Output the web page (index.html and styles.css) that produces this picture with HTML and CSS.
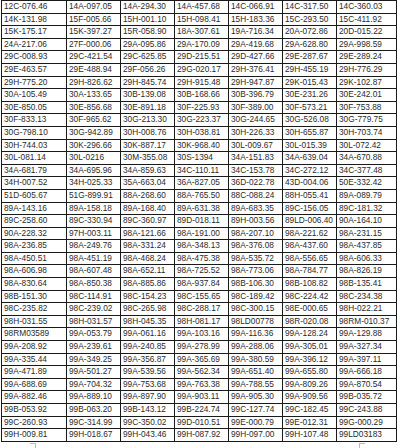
FILE: index.html
```html
<!DOCTYPE html>
<html>
<head>
<meta charset="utf-8">
<link rel="stylesheet" href="styles.css">
</head>
<body>
<div class="sheet">
<span>12C-076.46</span><span>14A-097.05</span><span>14A-294.30</span><span>14A-457.68</span><span>14C-066.91</span><span>14C-317.50</span><span>14C-360.03</span>
<span>14K-131.98</span><span>15F-005.66</span><span>15H-001.10</span><span>15H-098.41</span><span>15H-183.36</span><span>15C-293.50</span><span>15C-411.92</span>
<span>15K-175.17</span><span>15K-397.27</span><span>15R-058.90</span><span>18A-307.61</span><span>19A-716.34</span><span>20A-072.86</span><span>20D-015.22</span>
<span>24A-217.06</span><span>27F-000.06</span><span>29A-095.86</span><span>29A-170.09</span><span>29A-419.68</span><span>29A-628.80</span><span>29A-998.59</span>
<span>29C-008.93</span><span>29C-421.54</span><span>29C-625.85</span><span>29D-215.51</span><span>29D-427.66</span><span>29E-287.67</span><span>29E-289.24</span>
<span>29E-463.57</span><span>29E-488.94</span><span>29F-056.26</span><span>29G-020.17</span><span>29H-376.41</span><span>29H-455.19</span><span>29H-776.29</span>
<span>29H-775.20</span><span>29H-826.62</span><span>29H-845.74</span><span>29H-915.48</span><span>29H-947.87</span><span>29K-015.43</span><span>29K-102.87</span>
<span>30A-105.49</span><span>30A-133.65</span><span>30B-139.08</span><span>30B-168.66</span><span>30B-396.79</span><span>30E-231.26</span><span>30E-242.01</span>
<span>30E-850.05</span><span>30E-856.68</span><span>30E-891.18</span><span>30F-225.93</span><span>30F-389.00</span><span>30F-573.21</span><span>30F-753.88</span>
<span>30F-833.13</span><span>30F-965.62</span><span>30G-213.30</span><span>30G-223.37</span><span>30G-244.65</span><span>30G-526.08</span><span>30G-779.75</span>
<span>30G-798.10</span><span>30G-942.89</span><span>30H-008.76</span><span>30H-038.81</span><span>30H-226.33</span><span>30H-655.87</span><span>30H-703.74</span>
<span>30H-744.03</span><span>30K-296.66</span><span>30K-887.17</span><span>30K-968.40</span><span>30L-009.67</span><span>30L-015.39</span><span>30L-072.42</span>
<span>30L-081.14</span><span>30L-0216</span><span>30M-355.08</span><span>30S-1394</span><span>34A-151.83</span><span>34A-639.04</span><span>34A-670.88</span>
<span>34A-681.79</span><span>34A-695.96</span><span>34A-859.63</span><span>34C-110.11</span><span>34C-153.78</span><span>34C-272.12</span><span>34C-377.48</span>
<span>34H-007.52</span><span>34H-025.33</span><span>35A-663.04</span><span>36A-827.05</span><span>36D-022.78</span><span>43D-004.06</span><span>50E-332.42</span>
<span>51D-605.67</span><span>51G-899.91</span><span>88A-268.60</span><span>88A-765.50</span><span>88C-088.24</span><span>88H-055.41</span><span>89A-089.79</span>
<span>89A-143.16</span><span>89A-158.18</span><span>89A-168.40</span><span>89A-631.38</span><span>89A-683.35</span><span>89C-156.05</span><span>89C-181.32</span>
<span>89C-258.60</span><span>89C-330.94</span><span>89C-360.97</span><span>89D-018.11</span><span>89H-003.56</span><span>89LD-006.40</span><span>90A-164.10</span>
<span>90A-228.32</span><span>97H-003.11</span><span>98A-121.66</span><span>98A-191.00</span><span>98A-207.10</span><span>98A-221.62</span><span>98A-231.15</span>
<span>98A-236.85</span><span>98A-249.76</span><span>98A-331.24</span><span>98A-348.13</span><span>98A-376.08</span><span>98A-437.60</span><span>98A-437.85</span>
<span>98A-450.51</span><span>98A-451.19</span><span>98A-468.24</span><span>98A-475.38</span><span>98A-535.72</span><span>98A-556.65</span><span>98A-606.33</span>
<span>98A-606.98</span><span>98A-607.48</span><span>98A-652.11</span><span>98A-725.52</span><span>98A-773.06</span><span>98A-784.77</span><span>98A-826.19</span>
<span>98A-830.64</span><span>98A-850.38</span><span>98A-885.86</span><span>98A-937.84</span><span>98B-106.30</span><span>98B-108.82</span><span>98B-135.41</span>
<span>98B-151.30</span><span>98C-114.91</span><span>98C-154.23</span><span>98C-155.65</span><span>98C-189.42</span><span>98C-224.42</span><span>98C-234.38</span>
<span>98C-235.82</span><span>98C-239.02</span><span>98C-265.98</span><span>98C-288.17</span><span>98C-300.15</span><span>98E-000.65</span><span>98H-022.21</span>
<span>98H-031.55</span><span>98H-031.57</span><span>98H-045.35</span><span>98H-081.17</span><span>98LD00778</span><span>98R-020.08</span><span>98RM-010.37</span>
<span>98RM03589</span><span>99A-053.79</span><span>99A-061.16</span><span>99A-103.16</span><span>99A-116.36</span><span>99A-128.24</span><span>99A-129.88</span>
<span>99A-208.92</span><span>99A-239.61</span><span>99A-240.85</span><span>99A-278.99</span><span>99A-288.06</span><span>99A-305.01</span><span>99A-327.34</span>
<span>99A-335.44</span><span>99A-349.25</span><span>99A-356.87</span><span>99A-365.69</span><span>99A-380.59</span><span>99A-396.12</span><span>99A-397.11</span>
<span>99A-471.89</span><span>99A-501.27</span><span>99A-539.56</span><span>99A-562.34</span><span>99A-651.40</span><span>99A-655.80</span><span>99A-666.18</span>
<span>99A-688.69</span><span>99A-704.32</span><span>99A-753.68</span><span>99A-763.38</span><span>99A-788.55</span><span>99A-809.26</span><span>99A-870.54</span>
<span>99A-882.46</span><span>99A-889.10</span><span>99A-897.90</span><span>99A-903.11</span><span>99A-905.30</span><span>99A-909.56</span><span>99B-035.72</span>
<span>99B-053.92</span><span>99B-063.20</span><span>99B-143.12</span><span>99B-224.74</span><span>99C-127.74</span><span>99C-182.45</span><span>99C-243.88</span>
<span>99C-260.93</span><span>99C-314.99</span><span>99C-350.02</span><span>99D-010.51</span><span>99E-000.79</span><span>99E-012.31</span><span>99G-000.29</span>
<span>99H-009.81</span><span>99H-018.67</span><span>99H-043.46</span><span>99H-087.92</span><span>99H-097.00</span><span>99H-107.48</span><span>99LD03183</span>
</div>
<div class="marks"><i class="mark left"></i><i class="mark right"></i></div>
</body>
</html>
```
FILE: styles.css
```css
html, body {
  margin: 0;
  padding: 0;
  background: #fff;
}
body {
  width: 400px;
  height: 448px;
  overflow: hidden;
  font-family: "Liberation Sans", Arial, sans-serif;
}
.sheet {
  margin-left: 1px;
  width: 396px;
  box-sizing: border-box;
  display: grid;
  grid-template-columns: 65px 54px 54px 54px 54px 54px 60px;
  grid-auto-rows: 12.6px;
  border-top: 1px solid #1a1a1a;
  border-left: 1px solid #1a1a1a;
}
.sheet span {
  box-sizing: border-box;
  border-right: 1px solid #1a1a1a;
  border-bottom: 1px solid #1a1a1a;
  padding-left: 2px;
  font-size: 8.3px;
  line-height: 11.6px;
  color: #2a2a2a;
  white-space: nowrap;
  overflow: hidden;
}
.marks {
  display: flex;
  justify-content: space-between;
  padding: 1px 35px 0 30px;
}
.mark {
  display: block;
  width: 5px;
  height: 6px;
  border-top: 1px solid #bbb;
}
.mark.left {
  border-right: 1px solid #bbb;
}
.mark.right {
  border-left: 1px solid #bbb;
}
```
